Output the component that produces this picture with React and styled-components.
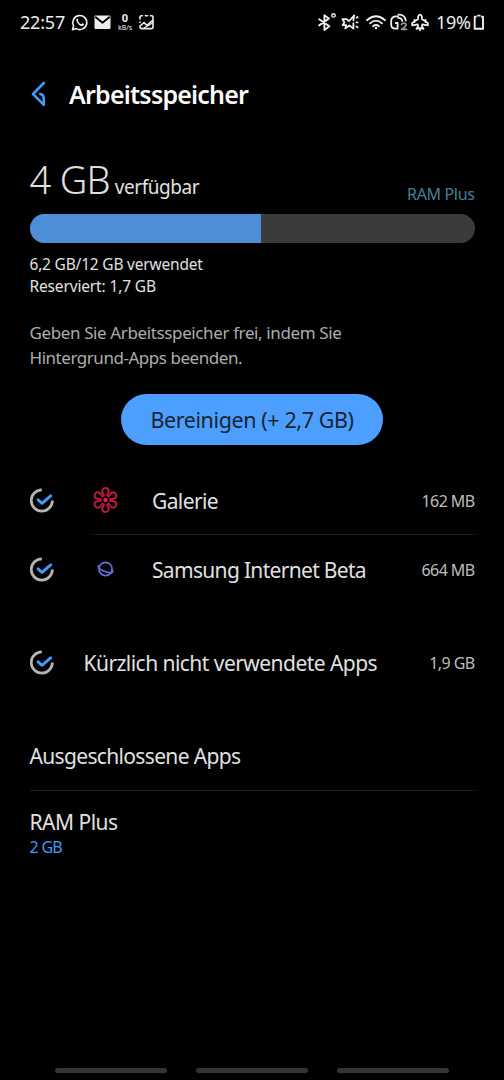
import React from 'react';
import styled, { createGlobalStyle } from 'styled-components';

const GlobalStyle = createGlobalStyle`
  * { box-sizing: border-box; }
  html, body { margin: 0; background: #000; }
  body { font-family: "Noto Sans", "Open Sans", sans-serif; color: #e4e4e4; }
`;

const Screen = styled.div`
  width: 504px;
  height: 1080px;
  background: #000;
  display: flex;
  flex-direction: column;
  overflow: hidden;
`;

const Text = styled.span`
  display: block;
  white-space: nowrap;
  font-size: ${(p) => p.$size}px;
  line-height: ${(p) => p.$line || 24}px;
  letter-spacing: ${(p) => p.$track || 0}px;
  font-weight: ${(p) => p.$weight || 400};
  color: ${(p) => p.$color || '#e0e0e0'};
`;

const StatusBar = styled.header`
  height: 43px;
  flex: none;
  display: flex;
  align-items: center;
  justify-content: space-between;
  padding: 0 19px 0 20px;
`;

const StatusGroup = styled.div`
  display: flex;
  align-items: center;
`;

const Percent = styled(Text)`
  width: 35px;
  margin-left: 7px;
`;

const StatusIcon = styled.svg`
  display: block;
  flex: none;
  width: ${(p) => p.$w}px;
  height: 20px;
  margin-left: ${(p) => p.$gap || 0}px;
  fill: none;
  stroke: #eee;
  stroke-width: 1.6;
  stroke-linecap: round;
  stroke-linejoin: round;
`;

const NetSpeed = styled.div`
  width: 16px;
  margin-left: 6px;
  display: flex;
  flex-direction: column;
  align-items: center;
  gap: 1px;
`;

const TitleBar = styled.div`
  height: 50px;
  margin-top: 26px;
  padding-left: 30px;
  flex: none;
  display: flex;
  align-items: center;
`;

const BackIcon = styled.svg`
  width: 18px;
  height: 28px;
  margin-right: 21px;
  fill: none;
  stroke: #429bf8;
  stroke-width: 2.6;
  stroke-linejoin: round;
  stroke-linecap: round;
`;

const Content = styled.main`
  flex: 1;
  margin-top: 40px;
  padding: 0 29.5px;
  display: flex;
  flex-direction: column;
`;

const Summary = styled.div`
  height: 45px;
  display: flex;
  justify-content: space-between;
  align-items: flex-end;
`;

const Available = styled.div`
  display: flex;
  align-items: baseline;
  align-self: flex-start;
  gap: 5px;
`;

const Meter = styled.div`
  height: 29px;
  margin-top: 10px;
  border-radius: 15px;
  background: #3b3b3b;
  overflow: hidden;
`;

const MeterFill = styled.div`
  height: 100%;
  background: #4c8fd6;
`;

const Stats = styled.div`
  margin-top: 11px;
  height: 43px;
`;

const Description = styled.div`
  margin-top: 24px;
  height: 50px;
`;

const CleanButton = styled.button`
  align-self: center;
  width: 262px;
  height: 51px;
  margin: 23px 0 0;
  padding: 1px 0 0;
  border: 0;
  border-radius: 26px;
  background: #4c9fff;
  font-family: inherit;
  display: flex;
  align-items: center;
  justify-content: center;
`;

const AppList = styled.section`
  margin-top: 21px;
`;

const AppRow = styled.div`
  height: 69px;
  display: flex;
  align-items: center;
`;

const AppBody = styled.div`
  flex: 1;
  height: 100%;
  display: flex;
  align-items: center;
  justify-content: space-between;
  margin-left: ${(p) => p.$indent}px;
  border-bottom: 1px solid ${(p) => (p.$divided ? '#1b1b1b' : 'transparent')};
`;

const AppLabel = styled.div`
  display: flex;
  align-items: center;
  gap: 34px;
`;

const RowText = styled(Text)`
  padding-top: 1px;
`;

const AppIcon = styled.svg`
  width: 25px;
  height: 26px;
  fill: none;
`;

const RecentApps = styled.section`
  margin-top: 24px;
`;

const Excluded = styled.section`
  height: 69px;
  margin-top: 25px;
  display: flex;
  align-items: center;
  border-bottom: 1px solid #1b1b1b;
`;

const RamPlus = styled.section`
  margin-top: 18px;
`;

const NavBar = styled.footer`
  flex: none;
  height: 12px;
  padding-left: 55px;
  display: flex;
  gap: 29px;
`;

const NavPill = styled.span`
  width: 112px;
  height: 5px;
  border-radius: 3px;
  background: #353535;
`;

const CheckSvg = styled.svg`
  flex: none;
  width: 25px;
  height: 26px;
  fill: none;
`;

const Check = () => (
  <CheckSvg viewBox="0.5 0.5 25 26">
    <path d="M12.3 2.4A10.6 10.6 0 1 0 22.9 13" stroke="#b4b4b4" strokeWidth="2.8" />
    <path d="M8.6 12.3L12.5 15.8L21.2 8.4" stroke="#429bf8" strokeWidth="3" strokeLinecap="round" strokeLinejoin="round" />
  </CheckSvg>
);

const petal = 'M10.9 8.6C11.2 7.6 9.3 6.4 9.3 4.2C9.3 2.2 10.6 1 12.5 1C14.4 1 15.7 2.2 15.7 4.2C15.7 6.4 13.8 7.6 14.1 8.6';

const GalleryIcon = () => (
  <AppIcon viewBox="0 0 25 26">
    {[0, 60, 120, 180, 240, 300].map((a) => (
      <path key={a} d={petal} transform={`rotate(${a} 12.5 13)`} stroke="#bd1740" strokeWidth="2" strokeLinecap="round" />
    ))}
    <circle cx="12.5" cy="13" r="2.3" fill="#e01c4b" />
  </AppIcon>
);

const InternetIcon = () => (
  <AppIcon viewBox="0 0 25 26" stroke="#6670d8" strokeLinecap="round">
    <circle cx="12.5" cy="13" r="6.6" strokeWidth="1.6" />
    <path d="M6.2 9.8C4 9.2 4.8 12.4 10 14.8C15 17 20.3 17.6 19.8 15.4C19.6 14.6 19.2 14.2 18.6 13.7" strokeWidth="1.5" />
  </AppIcon>
);

export default function App() {
  return (
    <>
      <GlobalStyle />
      <Screen>
        <StatusBar>
          <StatusGroup>
            <Text $size={18} $track={-0.2} $color="#eee">22:57</Text>
            <StatusIcon $w={18} $gap={6} viewBox="0 0 18 20">
              <path d="M1.5 17.7L2.6 13.8A7 7 0 1 1 5.3 16.6Z" />
              <path d="M5.4 7.2C5.9 6 6.8 6.2 7.1 7.3C7.6 8.7 6.7 8.7 7.3 9.7C8 10.9 8.8 11.6 9.8 12.1C10.6 12.4 10.7 11.2 11.3 11.2L13 12.1C13.2 13.6 11.8 14.2 10.6 14C7.9 13.4 5 10.3 5.4 7.2Z" fill="#eee" stroke="none" />
            </StatusIcon>
            <StatusIcon $w={17} $gap={5} viewBox="0 0 17 20">
              <rect x="0.5" y="3.5" width="16" height="13.5" rx="1" fill="#eee" stroke="none" />
              <path d="M1.8 5.3L8.5 10.7L15.2 5.3" stroke="#000" strokeWidth="1.8" />
            </StatusIcon>
            <NetSpeed>
              <Text $size={11} $line={11} $weight={700} $color="#eee">0</Text>
              <Text $size={7} $line={7} $color="#eee">kB/s</Text>
            </NetSpeed>
            <StatusIcon $w={15} $gap={6} viewBox="0 0 15 20">
              <path d="M1 7V5Q1 3.7 2.3 3.7H3.4M6.3 3.7H8.6M11.5 3.7H12.7Q14 3.7 14 5V15Q14 16.6 12.7 16.6H2.3Q1 16.6 1 15V14L5 10.6L8 13.4L14 8.2M1 10V10.4" />
              <path d="M4.6 16.2L13.5 11" strokeWidth="1.2" />
            </StatusIcon>
          </StatusGroup>
          <StatusGroup>
            <StatusIcon $w={18} viewBox="0 0 18 20">
              <path d="M1.2 7.2L11.4 14.2L6.4 18V3.2L10.8 6.6L1.2 13.4" strokeWidth="1.9" />
              <circle cx="15.5" cy="3.4" r="1.7" strokeWidth="1.4" />
            </StatusIcon>
            <StatusIcon $w={18} $gap={5} viewBox="0 0 18 20">
              <path d="M1.4 7.2H5.6L8.2 9L13.2 3.4L12.4 8.4M12.4 11.2V16.6L8.4 13.4L4.2 16.4L5.2 13.2H1.6L3.4 10.2L1.4 7.2" strokeWidth="1.8" />
              <path d="M15.6 5.8L16.6 5M15.4 10.3H16.6M15.4 14.4L16.6 15.4" strokeWidth="1.8" />
            </StatusIcon>
            <StatusIcon $w={20} $gap={7} viewBox="0 0 20 20">
              <path d="M1 8.2Q10 0.4 19 8.2M4 11.3Q10 6 16 11.3M7 14.2Q10 11.7 13 14.2" strokeWidth="1.8" />
              <circle cx="10" cy="16" r="1.3" fill="#eee" stroke="none" />
            </StatusIcon>
            <StatusIcon $w={18} $gap={4} viewBox="0 0 18 20">
              <path d="M8 4.4H5.5Q1.2 5 1.2 9V12.5Q1.2 16.7 5.5 16.7H7.6M7.6 16V11H5.8M8.5 2.6Q14.5 2 15.8 8.5M8.2 5.8Q11.6 5.6 12.3 9" strokeWidth="1.8" />
              <path d="M11.5 12.5Q12 11.2 13.8 11.2Q16 11.2 16 13Q16 14 11.7 17.4H16.5" stroke="#999" strokeWidth="1.8" />
            </StatusIcon>
            <StatusIcon $w={18} $gap={3} viewBox="0 0 18 20">
              <path d="M7.1 7V4.5Q9 0.9 10.9 4.5V7L16.8 11V13.4L11.3 12.3L10.9 14.5L12.5 16.8L9 16.2L5.5 16.8L7.1 14.5L6.7 12.3L1.2 13.4V11ZM3.5 8V10M14.5 8V10M9 16.2V18.3" strokeWidth="1.8" />
            </StatusIcon>
            <Percent $size={18} $track={-0.3} $color="#eee">19%</Percent>
            <StatusIcon $w={12} $gap={2} viewBox="0 0 12 20">
              <path d="M3.6 4.8H1.7V16.8H10V4.8H8.2M4.2 3.6H7.6" strokeWidth="1.9" strokeLinecap="butt" />
            </StatusIcon>
          </StatusGroup>
        </StatusBar>

        <TitleBar>
          <BackIcon viewBox="0 0 18 28">
            <path d="M13.8 3L3 14L13.8 24.8V18.2Q13.6 14.5 10.2 14" />
          </BackIcon>
          <Text $size={25} $line={34} $weight={600} $track={-0.8} $color="#fafafa">Arbeitsspeicher</Text>
        </TitleBar>

        <Content>
          <Summary>
            <Available>
              <Text $size={38} $line={40} $weight={300} $track={-0.7}>4 GB</Text>
              <Text $size={19} $line={20} $track={-0.45}>verfügbar</Text>
            </Available>
            <Text $size={16} $line={20} $track={-0.35} $color="#44809a">RAM Plus</Text>
          </Summary>
          <Meter>
            <MeterFill style={{ width: '52%' }} />
          </Meter>
          <Stats>
            <Text $size={15.5} $line={21.5} $track={-0.2}>6,2 GB/12 GB verwendet</Text>
            <Text $size={15.5} $line={21.5} $track={-0.15}>Reserviert: 1,7 GB</Text>
          </Stats>
          <Description>
            <Text $size={17} $line={24.8} $track={-0.38} $color="#adadad">Geben Sie Arbeitsspeicher frei, indem Sie</Text>
            <Text $size={17} $line={24.8} $track={-0.46} $color="#adadad">Hintergrund-Apps beenden.</Text>
          </Description>
          <CleanButton>
            <Text $size={21.5} $track={-0.4} $color="#1a2430">Bereinigen (+ 2,7 GB)</Text>
          </CleanButton>

          <AppList>
            <AppRow>
              <Check />
              <AppBody $indent={38.5} $divided>
                <AppLabel>
                  <GalleryIcon />
                  <RowText $size={21} $track={-0.6}>Galerie</RowText>
                </AppLabel>
                <RowText $size={16} $track={-0.6} $color="#bdbdbd">162 MB</RowText>
              </AppBody>
            </AppRow>
            <AppRow>
              <Check />
              <AppBody $indent={38.5}>
                <AppLabel>
                  <InternetIcon />
                  <RowText $size={21} $track={-0.68}>Samsung Internet Beta</RowText>
                </AppLabel>
                <RowText $size={16} $track={-0.6} $color="#bdbdbd">664 MB</RowText>
              </AppBody>
            </AppRow>
          </AppList>

          <RecentApps>
            <AppRow>
              <Check />
              <AppBody $indent={29}>
                <RowText $size={21} $track={-0.54}>Kürzlich nicht verwendete Apps</RowText>
                <RowText $size={16} $track={-0.6} $color="#bdbdbd">1,9 GB</RowText>
              </AppBody>
            </AppRow>
          </RecentApps>

          <Excluded>
            <Text $size={21} $track={-0.66}>Ausgeschlossene Apps</Text>
          </Excluded>
          <RamPlus>
            <Text $size={21} $line={26} $track={-0.5}>RAM Plus</Text>
            <Text $size={16} $line={24} $track={-0.7} $color="#429bf8">2 GB</Text>
          </RamPlus>
        </Content>

        <NavBar>
          <NavPill />
          <NavPill />
          <NavPill />
        </NavBar>
      </Screen>
    </>
  );
}
